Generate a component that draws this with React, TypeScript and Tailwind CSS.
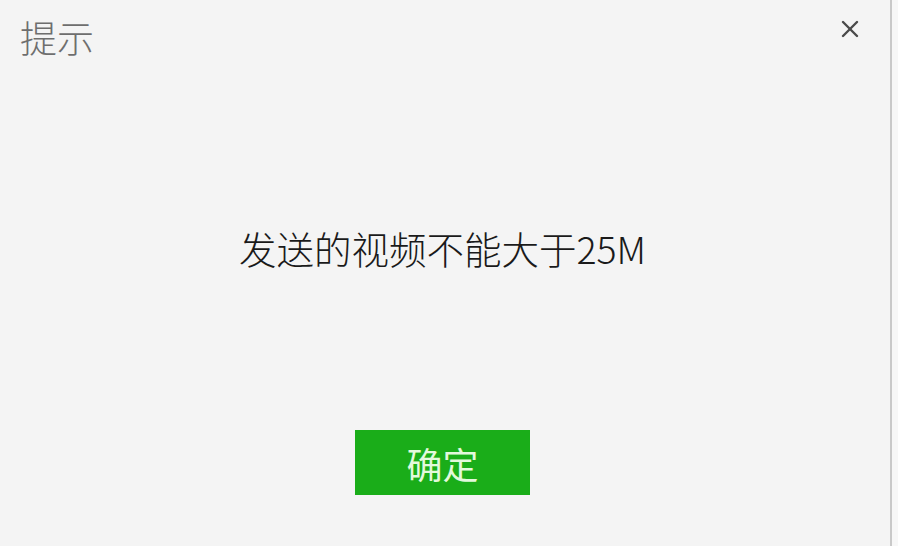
import { X } from "lucide-react";

export default function App() {
  return (
    <div
      className="flex h-[546px] w-[898px] bg-[#f7f7f7]"
      style={{ fontFamily: '"Noto Sans CJK SC", "Microsoft YaHei", sans-serif' }}
    >
      <div className="flex w-[892px] flex-col border-r-2 border-[#c9c9c9] bg-[#f4f4f4]">
        <div className="flex h-[70px] items-start justify-between pl-[20px] pr-[26px] pt-[13px]">
          <h1 className="text-[37px] font-light leading-[48px] text-[#6e6e6e]">提示</h1>
          <button className="mt-[2px] text-[#4a4a4a]">
            <X size={28} strokeWidth={2.1} />
          </button>
        </div>
        <div className="flex flex-1 flex-col items-center pr-[5px]">
          <p className="mt-[150px] text-[37.5px] font-light leading-[56px] text-[#1a1a1a]">
            发送的视频不能大于25M
          </p>
          <button className="mt-[154px] flex h-[65px] w-[175px] items-center justify-center bg-[#1aad19] text-[36px] leading-none text-[#e3f9dc]">
            确定
          </button>
        </div>
      </div>
    </div>
  );
}
